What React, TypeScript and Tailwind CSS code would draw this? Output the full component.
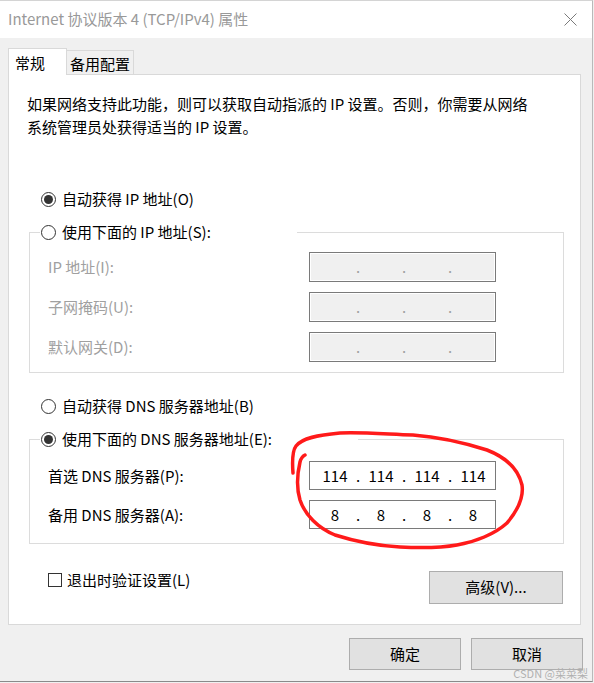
import React from 'react'

const FONT = "font-['Noto_Sans_CJK_SC','Noto_Sans',sans-serif]"

function Radio({ checked, label }: { checked?: boolean; label: string }) {
  return (
    <div className="flex items-center h-[22px] gap-[6px]">
      <span className="w-[15px] h-[15px] rounded-full border border-[#333] bg-white flex items-center justify-center shrink-0">
        {checked && <span className="w-[9px] h-[9px] rounded-full bg-[#333]" />}
      </span>
      <span className="text-[15px] leading-[22px] text-black whitespace-nowrap">{label}</span>
    </div>
  )
}

function IpField({ values, disabled, h }: { values?: string[]; disabled?: boolean; h: string }) {
  const segs = values ?? ['', '', '', '']
  return (
    <div
      className={`w-[187px] ${h} border border-[#7a7a7a] flex items-center pl-[5px] ${
        disabled ? 'bg-[#f0f0f0] shadow-[inset_0_0_0_1px_#ffffff] text-[#a0a0a0]' : 'bg-white text-black'
      }`}
    >
      {segs.map((s, i) => (
        <React.Fragment key={i}>
          <span className="w-[40px] text-center text-[15px] leading-[20px]">{s}</span>
          {i < 3 && <span className="w-[6px] text-center text-[15px] leading-[20px]">.</span>}
        </React.Fragment>
      ))}
    </div>
  )
}

function FieldRow({ label, disabled, children }: { label: string; disabled?: boolean; children: React.ReactNode }) {
  return (
    <div className="flex items-center pl-[18px]">
      <span className={`w-[261px] text-[15px] leading-[22px] ${disabled ? 'text-[#a0a0a0]' : 'text-black'}`}>{label}</span>
      {children}
    </div>
  )
}

function Button({ label, w, h }: { label: string; w: string; h: string }) {
  return (
    <button className={`${w} ${h} bg-[#e1e1e1] border border-[#adadad] text-[15px] text-black flex items-center justify-center`}>
      {label}
    </button>
  )
}

export default function App() {
  return (
    <div className={`relative w-[594px] h-[683px] bg-[#f0f0f0] overflow-hidden ${FONT}`}>
      <div className="w-[593px] h-[682px] border-r border-b border-t border-r-[#b9b9b9] border-b-[#8a8a8a] border-t-[#d4d4d4] flex flex-col">
        {/* title bar */}
        <div className="h-[37px] bg-white flex items-center justify-between pl-[8px] pr-[15px] shrink-0">
          <span className="text-[15px] text-[#999999] whitespace-nowrap">Internet 协议版本 4 (TCP/IPv4) 属性</span>
          <svg width="13" height="13" viewBox="0 0 13 13">
            <path d="M0.5 0.5 L12.5 12.5 M12.5 0.5 L0.5 12.5" stroke="#7a7a7a" strokeWidth="1" fill="none" />
          </svg>
        </div>

        {/* tabs */}
        <div className="flex items-end h-[36px] pl-[8px] shrink-0">
          <div className="relative z-10 w-[59px] h-[27px] -mb-[1px] bg-white border-l border-t border-r border-[#d9d9d9] pl-[6px] pt-[3px] text-[15px] leading-[22px] text-black">
            常规
          </div>
          <div className="w-[67px] h-[24px] border-t border-r border-[#d9d9d9] bg-[#f0f0f0] pl-[3px] pt-[2px] text-[15px] leading-[22px] text-black">
            备用配置
          </div>
        </div>

        {/* panel */}
        <div className="ml-[8px] w-[573px] h-[551px] bg-white border border-[#d9d9d9] shrink-0">
          <p className="pl-[18px] pt-[17px] text-[15px] leading-[23px] text-black whitespace-nowrap">
            如果网络支持此功能，则可以获取自动指派的 IP 设置。否则，你需要从网络
            <br />
            系统管理员处获得适当的 IP 设置。
          </p>

          <div className="mt-[50px] ml-[32px]">
            <Radio checked label="自动获得 IP 地址(O)" />
          </div>

          <fieldset className="mt-[11px] ml-[20px] w-[535px] border border-[#dcdcdc] pb-[10px]">
            <legend className="ml-[10px] w-[257px] pl-[1px]">
              <Radio label="使用下面的 IP 地址(S):" />
            </legend>
            <div className="mt-[9px] flex flex-col gap-[10px]">
              <FieldRow label="IP 地址(I):" disabled>
                <IpField disabled h="h-[30px]" />
              </FieldRow>
              <FieldRow label="子网掩码(U):" disabled>
                <IpField disabled h="h-[30px]" />
              </FieldRow>
              <FieldRow label="默认网关(D):" disabled>
                <IpField disabled h="h-[30px]" />
              </FieldRow>
            </div>
          </fieldset>

          <div className="mt-[22px] ml-[32px]">
            <Radio label="自动获得 DNS 服务器地址(B)" />
          </div>

          <fieldset className="mt-[11px] ml-[20px] w-[535px] border border-[#dcdcdc] pb-[14px]">
            <legend className="ml-[10px] w-[318px] pl-[1px]">
              <Radio checked label="使用下面的 DNS 服务器地址(E):" />
            </legend>
            <div className="mt-[11px] flex flex-col gap-[10px]">
              <FieldRow label="首选 DNS 服务器(P):">
                <IpField values={['114', '114', '114', '114']} h="h-[29px]" />
              </FieldRow>
              <FieldRow label="备用 DNS 服务器(A):">
                <IpField values={['8', '8', '8', '8']} h="h-[29px]" />
              </FieldRow>
            </div>
          </fieldset>

          <div className="mt-[25px] flex items-start justify-between pl-[39px] pr-[17px]">
            <label className="flex items-center h-[22px] gap-[5px]">
              <span className="w-[14px] h-[14px] border border-[#333] bg-white" />
              <span className="text-[15px] leading-[22px] text-black">退出时验证设置(L)</span>
            </label>
            <div className="mt-[2px]">
              <Button label="高级(V)..." w="w-[134px]" h="h-[33px]" />
            </div>
          </div>
        </div>

        {/* dialog buttons */}
        <div className="mt-[13px] flex justify-end gap-[10px] pr-[9px]">
          <Button label="确定" w="w-[112px]" h="h-[32px]" />
          <Button label="取消" w="w-[112px]" h="h-[32px]" />
        </div>
      </div>

      {/* red hand-drawn annotation */}
      <svg className="absolute left-0 top-0 pointer-events-none" width="594" height="683" viewBox="0 0 594 683">
        <path
          d="M293 473 C292 460 293 450 296 446 C302 438 318 435 340 433 C360 432 385 434 413 435 C440 437 465 443 487 450 C505 457 518 468 522 485 C524 498 518 510 507 523 C495 534 475 542 457 545 C440 548 420 548 400 547 C380 546 357 542 335 535 C318 528 305 515 300 500 C297 490 297 475 300 462 C301 458 303 456 305 455"
          stroke="#ff1a1a"
          strokeWidth="3.5"
          fill="none"
          strokeLinecap="round"
          strokeLinejoin="round"
        />
      </svg>

      {/* watermark */}
      <span className="absolute right-[6px] bottom-[2px] text-[11px] text-[#b0b0b0] whitespace-nowrap">CSDN @菜菜梨</span>
    </div>
  )
}
